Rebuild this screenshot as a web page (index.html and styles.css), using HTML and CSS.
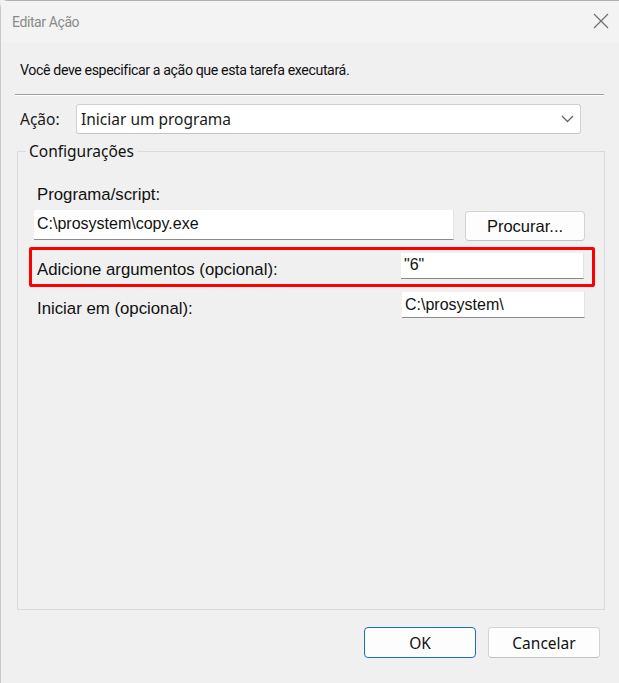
FILE: index.html
```html
<!DOCTYPE html>
<html lang="pt">
<head>
<meta charset="utf-8">
<title>Editar Ação</title>
<link rel="stylesheet" href="styles.css">
</head>
<body>
<div class="window">
  <div class="titlebar">
    <span class="title">Editar Ação</span>
    <svg class="close" width="16" height="16" viewBox="0 0 16 16"><path d="M1 1 L15 15 M15 1 L1 15" stroke="#6e6e6e" stroke-width="1.2" fill="none"/></svg>
  </div>
  <div class="content">
    <p class="intro">Você deve especificar a ação que esta tarefa executará.</p>
    <div class="divider"></div>
    <div class="action-row">
      <span class="action-label">Ação:</span>
      <div class="select">
        <span>Iniciar um programa</span>
        <svg width="13" height="8" viewBox="0 0 13 8"><path d="M1 1 L6.5 6.5 L12 1" stroke="#666" stroke-width="1.3" fill="none"/></svg>
      </div>
    </div>
    <fieldset class="group">
      <legend>Configurações</legend>
      <div class="ms-label prog-label">Programa/script:</div>
      <div class="prog-row">
        <div class="input prog-input">C:\prosystem\copy.exe</div>
        <button class="btn browse">Procurar...</button>
      </div>
      <div class="highlight">
        <span class="ms-label">Adicione argumentos (opcional):</span>
        <div class="input short">"6"</div>
      </div>
      <div class="start-row">
        <span class="ms-label">Iniciar em (opcional):</span>
        <div class="input short">C:\prosystem\</div>
      </div>
    </fieldset>
    <div class="buttons">
      <button class="btn dlg primary">OK</button>
      <button class="btn dlg">Cancelar</button>
    </div>
  </div>
</div>
</body>
</html>
```
FILE: styles.css
```css
* { box-sizing: border-box; }
html, body { margin: 0; padding: 0; }
body {
  width: 619px;
  height: 683px;
  overflow: hidden;
  background: #f0f0f0;
  font-family: "Noto Sans", "Liberation Sans", sans-serif;
  color: #1a1a1a;
}
.window {
  width: 619px;
  height: 683px;
  background: #f0f0f0;
  border-top: 1px solid #b0b0b0;
  border-left: 1px solid #c8c8c8;
  border-top-left-radius: 8px;
}
.titlebar {
  height: 41px;
  background: #f3f3f3;
  display: flex;
  align-items: center;
  justify-content: space-between;
  padding: 0 10px 0 11px;
}
.title {
  font-family: "Roboto", sans-serif;
  font-size: 14px;
  letter-spacing: -0.4px;
  color: #8a8a8a;
  margin-top: 1px;
}
.close { margin-top: -1px; }
.content {
  padding: 0 19px 0 14px;
}
.intro {
  margin: 18px 0 0 5px;
  font-family: "Roboto", sans-serif;
  font-size: 14.2px;
  letter-spacing: -0.4px;
  line-height: 20px;
  color: #111;
}
.divider {
  margin-top: 14px;
  width: 589px;
  height: 2px;
  border-top: 1px solid #a0a0a0;
  border-bottom: 1px solid #ffffff;
}
.action-row {
  display: flex;
  align-items: center;
  margin-top: 8px;
  height: 30px;
}
.action-label {
  width: 61px;
  padding-left: 5px;
  font-size: 15.5px;
}
.select {
  width: 505px;
  height: 30px;
  background: #fff;
  border: 1px solid #d0d0d0;
  border-bottom-color: #c4c4c4;
  border-radius: 3px;
  display: flex;
  align-items: center;
  justify-content: space-between;
  padding: 0 6px 0 4px;
  font-size: 15.5px;
  color: #1a1a1a;
}
.group {
  margin: 7px 0 0 2px;
  width: 588px;
  height: 469px;
  border: 1px solid #dadada;
  padding: 0 16px;
  min-width: 0;
}
.group legend {
  padding: 0 3px;
  margin-left: -8px;
  font-size: 15.5px;
  line-height: 20px;
  color: #111;
}
.ms-label {
  font-family: "Liberation Sans", Arial, sans-serif;
  font-size: 16.8px;
  color: #111;
}
.prog-label {
  margin: 25px 0 0 3px;
  line-height: 18px;
}
.prog-row {
  display: flex;
  align-items: flex-start;
  gap: 11px;
  margin-top: 6px;
}
.input {
  background: #fff;
  border-bottom: 1px solid #8a8a8a;
  border-right: 1px solid #e4e4e4;
  font-family: "Liberation Sans", Arial, sans-serif;
  font-size: 16px;
  color: #111;
  display: flex;
  align-items: center;
  padding-left: 3px;
}
.prog-input {
  width: 420px;
  height: 30px;
  padding-bottom: 1px;
}
.btn {
  background: #fdfdfd;
  border: 1px solid #d3d3d3;
  border-bottom-color: #c2c2c2;
  border-radius: 4px;
  color: #111;
  padding: 0;
}
.browse {
  width: 120px;
  height: 30px;
  margin-top: 1px;
  font-family: "Liberation Sans", Arial, sans-serif;
  font-size: 16.5px;
}
.highlight {
  margin: 6px -7px 0 -5px;
  height: 40px;
  border: 3px solid #ff0000;
  border-radius: 2px;
  display: flex;
  align-items: center;
  justify-content: space-between;
  padding: 0 8px 0 5px;
}
.highlight .ms-label { margin-top: 5px; }
.highlight .input { margin-top: -3px; }
.short {
  width: 183px;
  height: 26px;
}
.start-row {
  margin-top: 4px;
  display: flex;
  align-items: center;
  justify-content: space-between;
  padding-left: 3px;
  margin-right: 3px;
}
.start-row .ms-label { margin-top: 8px; }
.buttons {
  display: flex;
  justify-content: flex-end;
  gap: 12px;
  margin-top: 17px;
}
.dlg {
  width: 112px;
  height: 31px;
  font-family: "Noto Sans", sans-serif;
  font-size: 15.5px;
}
.primary {
  border: 1.5px solid #1a6fc4;
}
```
